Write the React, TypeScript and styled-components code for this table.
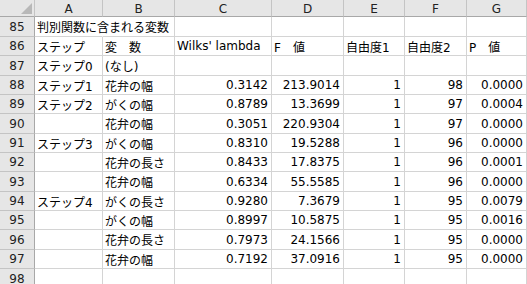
import { Fragment } from 'react';
import styled, { createGlobalStyle } from 'styled-components';

const GlobalStyle = createGlobalStyle`
  html, body {
    margin: 0;
    padding: 0;
    background: #ffffff;
    overflow: hidden;
  }
`;

// visible column letters; a sliver of the next column shows at the right edge
const COLS = ['A', 'B', 'C', 'D', 'E', 'F', 'G', ''];
const COL_WIDTHS = [35, 68, 72, 97, 72, 61, 62, 60, 20];
const ROW_HEIGHTS = [20, 19, 20, 19, 19, 20, 19, 19, 20, 19, 19, 20, 19, 20];

type Row = {
  num: number;
  cells: string[];
};

const rows: Row[] = [
  { num: 85, cells: ['判別関数に含まれる変数', '', '', '', '', '', ''] },
  { num: 86, cells: ['ステップ', '変　数', "Wilks' lambda", 'F　値', '自由度1', '自由度2', 'P　値'] },
  { num: 87, cells: ['ステップ0', '(なし)', '', '', '', '', ''] },
  { num: 88, cells: ['ステップ1', '花弁の幅', '0.3142', '213.9014', '1', '98', '0.0000'] },
  { num: 89, cells: ['ステップ2', 'がくの幅', '0.8789', '13.3699', '1', '97', '0.0004'] },
  { num: 90, cells: ['', '花弁の幅', '0.3051', '220.9304', '1', '97', '0.0000'] },
  { num: 91, cells: ['ステップ3', 'がくの幅', '0.8310', '19.5288', '1', '96', '0.0000'] },
  { num: 92, cells: ['', '花弁の長さ', '0.8433', '17.8375', '1', '96', '0.0001'] },
  { num: 93, cells: ['', '花弁の幅', '0.6334', '55.5585', '1', '96', '0.0000'] },
  { num: 94, cells: ['ステップ4', 'がくの長さ', '0.9280', '7.3679', '1', '95', '0.0079'] },
  { num: 95, cells: ['', 'がくの幅', '0.8997', '10.5875', '1', '95', '0.0016'] },
  { num: 96, cells: ['', '花弁の長さ', '0.7973', '24.1566', '1', '95', '0.0000'] },
  { num: 97, cells: ['', '花弁の幅', '0.7192', '37.0916', '1', '95', '0.0000'] },
  { num: 98, cells: ['', '', '', '', '', '', ''] },
];

const Sheet = styled.div`
  display: grid;
  grid-template-columns: ${COL_WIDTHS.map((w) => `${w}px`).join(' ')};
  grid-template-rows: 17px ${ROW_HEIGHTS.map((h) => `${h}px`).join(' ')};
  width: 547px;
  font-family: "DejaVu Sans", "Noto Sans CJK JP", sans-serif;
  font-size: 12px;
  color: #000000;
`;

const Corner = styled.div`
  position: relative;
  box-sizing: border-box;
  background: #e6e6e6;
  border-right: 1px solid #c4c4c4;
  border-bottom: 1px solid #a8a8a8;
  &::after {
    content: '';
    position: absolute;
    right: 2px;
    bottom: 2px;
    width: 0;
    height: 0;
    border-left: 11px solid transparent;
    border-bottom: 11px solid #b8b8b8;
  }
`;

const ColHeader = styled.div`
  box-sizing: border-box;
  background: #e6e6e6;
  border-right: 1px solid #c4c4c4;
  border-bottom: 1px solid #a8a8a8;
  display: flex;
  align-items: center;
  justify-content: center;
  color: #222222;
  padding-top: 1px;
`;

const RowHeader = styled.div`
  box-sizing: border-box;
  background: #e6e6e6;
  border-right: 1px solid #a8a8a8;
  border-bottom: 1px solid #c4c4c4;
  display: flex;
  align-items: center;
  justify-content: center;
  color: #222222;
`;

const Cell = styled.div<{ $numeric?: boolean; $overflow?: boolean }>`
  box-sizing: border-box;
  border-right: ${(p) => (p.$overflow ? '1px solid transparent' : '1px solid #d4d4d4')};
  border-bottom: 1px solid #d4d4d4;
  display: flex;
  align-items: center;
  justify-content: ${(p) => (p.$numeric ? 'flex-end' : 'flex-start')};
  padding: 0 3px 0 2px;
  white-space: nowrap;
  overflow: ${(p) => (p.$overflow ? 'visible' : 'hidden')};
  position: relative;
`;

const isNumeric = (s: string) => /^[0-9.]+$/.test(s);

export default function App() {
  return (
    <>
      <GlobalStyle />
      <Sheet>
        <Corner />
        {COLS.map((c, i) => (
          <ColHeader key={`c${i}`}>{c}</ColHeader>
        ))}
        {rows.map((row) => (
          <Fragment key={row.num}>
            <RowHeader>{row.num}</RowHeader>
            {row.cells.map((v, i) => (
              <Cell key={i} $numeric={isNumeric(v)} $overflow={i === 0 && row.num === 85}>
                {v}
              </Cell>
            ))}
            <Cell />
          </Fragment>
        ))}
      </Sheet>
    </>
  );
}
